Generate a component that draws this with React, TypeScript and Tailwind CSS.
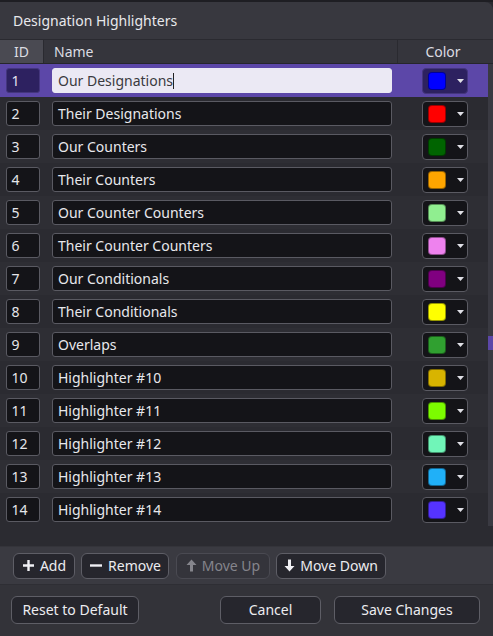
import React from "react";

const rows: { id: number; name: string; color: string }[] = [
  { id: 1, name: "Our Designations", color: "#0000ff" },
  { id: 2, name: "Their Designations", color: "#ff0000" },
  { id: 3, name: "Our Counters", color: "#006400" },
  { id: 4, name: "Their Counters", color: "#ffa500" },
  { id: 5, name: "Our Counter Counters", color: "#90ee90" },
  { id: 6, name: "Their Counter Counters", color: "#ee82ee" },
  { id: 7, name: "Our Conditionals", color: "#800080" },
  { id: 8, name: "Their Conditionals", color: "#ffff00" },
  { id: 9, name: "Overlaps", color: "#30a030" },
  { id: 10, name: "Highlighter #10", color: "#d8b400" },
  { id: 11, name: "Highlighter #11", color: "#7cfc00" },
  { id: 12, name: "Highlighter #12", color: "#70f5b8" },
  { id: 13, name: "Highlighter #13", color: "#20b0f8" },
  { id: 14, name: "Highlighter #14", color: "#5533ff" },
];

function Caret() {
  return (
    <svg width="7" height="4" viewBox="0 0 7 4" className="block">
      <path d="M0 0 L7 0 L3.5 4 Z" fill="#e0e0e6" />
    </svg>
  );
}

function Btn({
  children,
  disabled,
  className,
}: {
  children: React.ReactNode;
  disabled?: boolean;
  className?: string;
}) {
  return (
    <div
      className={
        "flex items-center justify-center gap-[5px] rounded-[6px] border text-[14px] leading-none " +
        (disabled
          ? "border-[#4a4a52] bg-[#34343b] text-[#85858c] "
          : "border-[#5e5e66] bg-[#26262d] text-[#ececf0] ") +
        (className || "")
      }
    >
      {children}
    </div>
  );
}

export default function App() {
  return (
    <div
      className="w-[493px] h-[636px] bg-[#29292f] overflow-hidden flex flex-col"
      style={{ fontFamily: '"Noto Sans", "Open Sans", sans-serif' }}
    >
      <div className="h-[2px] bg-[#1e1e23] shrink-0" />
      {/* Title bar */}
      <div className="h-[38px] shrink-0 bg-[#38383f] rounded-tr-[8px] flex items-center pl-[13px] text-[14px] text-[#e8e8ec] border-b border-[#2a2a30]">
        Designation Highlighters
      </div>
      {/* Header */}
      <div className="h-[24px] shrink-0 flex bg-[#35353c] text-[14px] text-[#dcdce2] border-b border-[#26262c]">
        <div className="w-[44px] bg-[#4a4a52] flex items-center justify-center border-r border-[#2a2a30]">ID</div>
        <div className="w-[354px] flex items-center pl-[10px] border-r border-[#2a2a30]">Name</div>
        <div className="w-[90px] flex items-center justify-center">Color</div>
        <div className="flex-1" />
      </div>
      {/* Rows */}
      <div className="flex shrink-0">
        <div className="flex flex-col w-[488px]">
          {rows.map((r, i) => {
            const sel = i === 0;
            return (
              <div
                key={r.id}
                className={
                  "h-[33px] flex items-center " +
                  (sel ? "bg-[#5c47a8]" : i % 2 === 1 ? "bg-[#2b2b31]" : "bg-[#2e2e34]")
                }
              >
                <div className="w-[44px] flex justify-center pl-[1px]">
                  <div
                    className={
                      "w-[34px] h-[25px] rounded-[3px] border flex items-center pl-[5px] text-[14px] " +
                      (sel
                        ? "bg-[#2d2160] border-[#44367e] text-[#e6e4f0]"
                        : "bg-[#141418] border-[#5a5a62] text-[#e6e6ea]")
                    }
                  >
                    {r.id}
                  </div>
                </div>
                <div className="w-[354px] pl-[8px] pr-[6px]">
                  <div
                    className={
                      "h-[25px] rounded-[3px] border flex items-center pl-[5px] text-[14px] " +
                      (sel
                        ? "bg-[#ebe9f4] border-[#ebe9f4] text-[#3a3a40]"
                        : "bg-[#141418] border-[#5a5a62] text-[#e8e8ec]")
                    }
                  >
                    {r.name}
                    {sel && <span className="w-[1px] h-[16px] bg-[#222] ml-[0px]" />}
                  </div>
                </div>
                <div className="w-[90px] pl-[24px]">
                  <div
                    className={
                      "w-[46px] h-[26px] rounded-[4px] border flex items-center pl-[5px] " +
                      (sel ? "bg-[#2d2160] border-[#44367e]" : "bg-[#141418] border-[#5a5a62]")
                    }
                  >
                    <div
                      className="w-[18px] h-[18px] rounded-[4px] border border-black/40"
                      style={{ backgroundColor: r.color }}
                    />
                    <div className="ml-[11px]">
                      <Caret />
                    </div>
                  </div>
                </div>
              </div>
            );
          })}
        </div>
        <div className="w-[5px] bg-[#3a3a42] flex flex-col">
          <div className="h-[272px]" />
          <div className="h-[14px] bg-[#5c47a8]" />
        </div>
      </div>
      <div className="h-[20px] shrink-0 bg-[#2b2b31]" />
      {/* Button bar */}
      <div className="h-[38px] shrink-0 bg-[#3a3a41] border-t border-[#34343a] flex items-center pl-[13px] gap-[6px]">
        <Btn className="w-[62px] h-[26px]">
          <svg width="13" height="13" viewBox="0 0 13 13">
            <path d="M6.5 1 V12 M1 6.5 H12" stroke="#f0f0f4" strokeWidth="2.4" />
          </svg>
          Add
        </Btn>
        <Btn className="w-[88px] h-[26px]">
          <svg width="14" height="13" viewBox="0 0 14 13">
            <path d="M1 6.5 H13" stroke="#f0f0f4" strokeWidth="2.4" />
          </svg>
          Remove
        </Btn>
        <Btn disabled className="w-[94px] h-[26px] ml-[1px]">
          <svg width="11" height="13" viewBox="0 0 11 13">
            <path d="M5.5 0.5 L10.5 6 H7 V12.5 H4 V6 H0.5 Z" fill="#85858c" />
          </svg>
          Move Up
        </Btn>
        <Btn className="w-[110px] h-[26px]">
          <svg width="11" height="13" viewBox="0 0 11 13">
            <path d="M5.5 12.5 L10.5 7 H7 V0.5 H4 V7 H0.5 Z" fill="#f0f0f4" />
          </svg>
          Move Down
        </Btn>
      </div>
      {/* Footer */}
      <div className="flex-1 bg-[#333339] border-t border-[#2e2e34] flex items-start pt-[11px] pl-[11px]">
        <Btn className="w-[128px] h-[28px]">Reset to Default</Btn>
        <Btn className="w-[101px] h-[28px] ml-[81px]">Cancel</Btn>
        <Btn className="w-[146px] h-[28px] ml-[13px]">Save Changes</Btn>
      </div>
    </div>
  );
}
